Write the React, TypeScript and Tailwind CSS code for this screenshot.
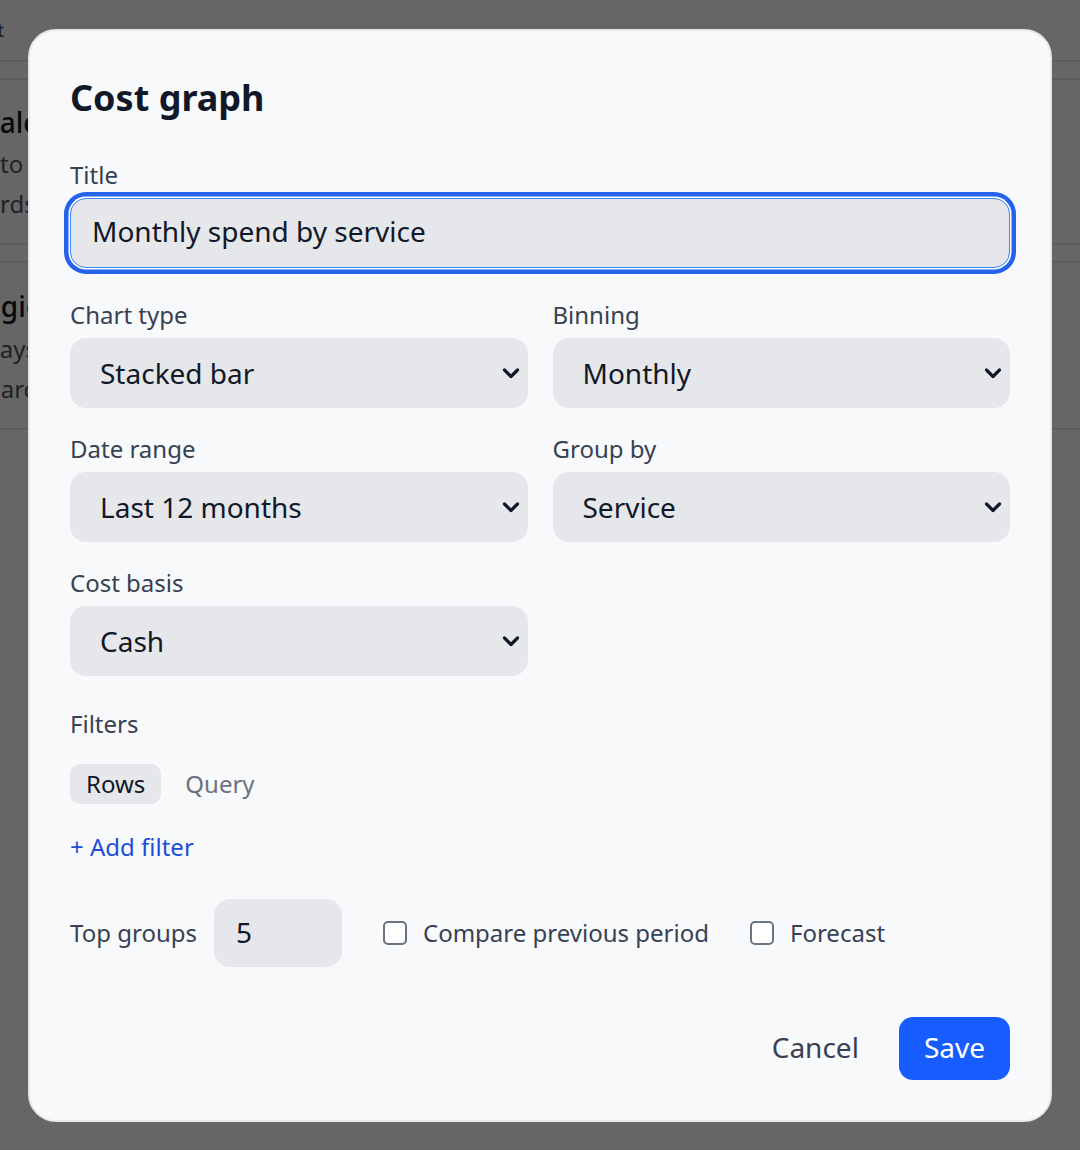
import React from "react";

const Chevron = () => (
  <svg
    width="18"
    height="11"
    viewBox="0 0 18 11"
    fill="none"
    className="pointer-events-none absolute right-[8px] top-1/2 -translate-y-1/2"
  >
    <path d="M2.5 2.5L9 9L15.5 2.5" stroke="#111827" strokeWidth="3.2" strokeLinecap="round" strokeLinejoin="round" />
  </svg>
);

function SelectField({ label, value, options }: { label: string; value: string; options: string[] }) {
  return (
    <div className="flex flex-col gap-2">
      <label className="text-[24px] leading-[30px] text-[#374151]">{label}</label>
      <div className="relative">
        <select
          defaultValue={value}
          className="h-[70px] w-full appearance-none rounded-2xl bg-[#e5e7eb] pl-[30px] pr-10 text-[28px] text-[#111827] outline-none"
        >
          {options.map((o) => (
            <option key={o}>{o}</option>
          ))}
        </select>
        <Chevron />
      </div>
    </div>
  );
}

function Check({ label }: { label: string }) {
  return (
    <label className="flex items-center gap-4 text-[24px] leading-[30px] text-[#374151]">
      <input
        type="checkbox"
        className="h-6 w-6 appearance-none rounded-[5px] border-2 border-[#6b7280] bg-white"
      />
      {label}
    </label>
  );
}

export default function App() {
  return (
    <div className="relative h-[1150px] w-full overflow-hidden bg-white font-['Noto_Sans',sans-serif]">
      {/* background page */}
      <div className="h-[1150px] bg-white">
        <div className="flex h-[62px] items-center border-b-2 border-[#e5e7eb]">
          <span className="-ml-[196px] w-[200px] whitespace-nowrap text-right text-[18px] text-[#374151]">Reports list</span>
        </div>
        <div className="mt-[16px] h-[167px] border-y-2 border-[#e5e7eb] pt-[24px]">
          <div className="-ml-[18px] whitespace-nowrap text-[28px] leading-[36px] font-medium text-[#111827]">Calculator</div>
          <div className="mt-1 whitespace-nowrap text-[24px] leading-[40px] text-[#4b5563]">to all services</div>
          <div className="-ml-[100px] whitespace-nowrap text-[24px] leading-[40px] text-[#4b5563]">Dashboards</div>
        </div>
        <div className="mt-[16px] h-[169px] border-y-2 border-[#e5e7eb] pt-[25px]">
          <div className="-ml-[33px] whitespace-nowrap text-[28px] leading-[36px] font-medium text-[#111827]">Regions</div>
          <div className="mt-[5px] -ml-[15px] whitespace-nowrap text-[24px] leading-[40px] text-[#4b5563]">days</div>
          <div className="-ml-[26px] whitespace-nowrap text-[24px] leading-[40px] text-[#4b5563]">Search</div>
        </div>
      </div>

      {/* overlay */}
      <div className="fixed inset-0 flex items-center justify-center bg-black/60">
        <div className="w-[1024px] rounded-[28px] border-2 border-[#e5e7eb] bg-[#f8f9fb] px-10 pb-10 pt-[45px]">
          <h2 className="text-[36px] font-bold leading-[44px] text-[#111827]">Cost graph</h2>

          <div className="mt-10 flex flex-col gap-2">
            <label className="text-[24px] leading-[30px] text-[#374151]">Title</label>
            <input
              defaultValue="Monthly spend by service"
              className="h-[70px] w-full rounded-2xl border-[1.5px] border-[#3b82f6] bg-[#e5e7eb] px-[21px] pb-[3px] text-[28px] text-[#111827] shadow-[0_0_0_1.5px_#ffffff,0_0_0_6px_#2563eb] outline-none"
            />
          </div>

          <div className="mt-[32px] grid grid-cols-2 gap-x-[25px] gap-y-[26px]">
            <SelectField label="Chart type" value="Stacked bar" options={["Stacked bar", "Line", "Area"]} />
            <SelectField label="Binning" value="Monthly" options={["Daily", "Weekly", "Monthly"]} />
            <SelectField label="Date range" value="Last 12 months" options={["Last 30 days", "Last 12 months"]} />
            <SelectField label="Group by" value="Service" options={["Service", "Account", "Region"]} />
            <SelectField label="Cost basis" value="Cash" options={["Cash", "Amortized"]} />
          </div>

          <div className="mt-[33px] text-[24px] leading-[30px] text-[#374151]">Filters</div>
          <div className="mt-[25px] flex items-center gap-2">
            <button className="h-10 rounded-[10px] bg-[#e5e7eb] px-4 text-[24px] leading-[30px] text-[#111827]">Rows</button>
            <button className="h-10 px-4 text-[24px] leading-[30px] text-[#6b7280]">Query</button>
          </div>
          <button className="mt-[28px] block text-[24px] leading-[30px] text-[#1d4ed8]">+ Add filter</button>

          <div className="mt-[37px] flex items-center">
            <span className="text-[24px] leading-[30px] text-[#374151]">Top groups</span>
            <input
              defaultValue="5"
              className="ml-[17px] h-[68px] w-[128px] rounded-2xl bg-[#e5e7eb] pb-[2px] pl-[22px] text-[28px] text-[#111827] outline-none"
            />
            <div className="ml-[41px]">
              <Check label="Compare previous period" />
            </div>
            <div className="ml-[41px]">
              <Check label="Forecast" />
            </div>
          </div>

          <div className="mt-[50px] flex items-center justify-end gap-10">
            <button className="pb-[3px] text-[28px] leading-[36px] text-[#374151]">Cancel</button>
            <button className="h-[63px] rounded-[14px] bg-[#175cff] px-[25px] pb-[3px] text-[28px] leading-[36px] text-white">Save</button>
          </div>
        </div>
      </div>
    </div>
  );
}
